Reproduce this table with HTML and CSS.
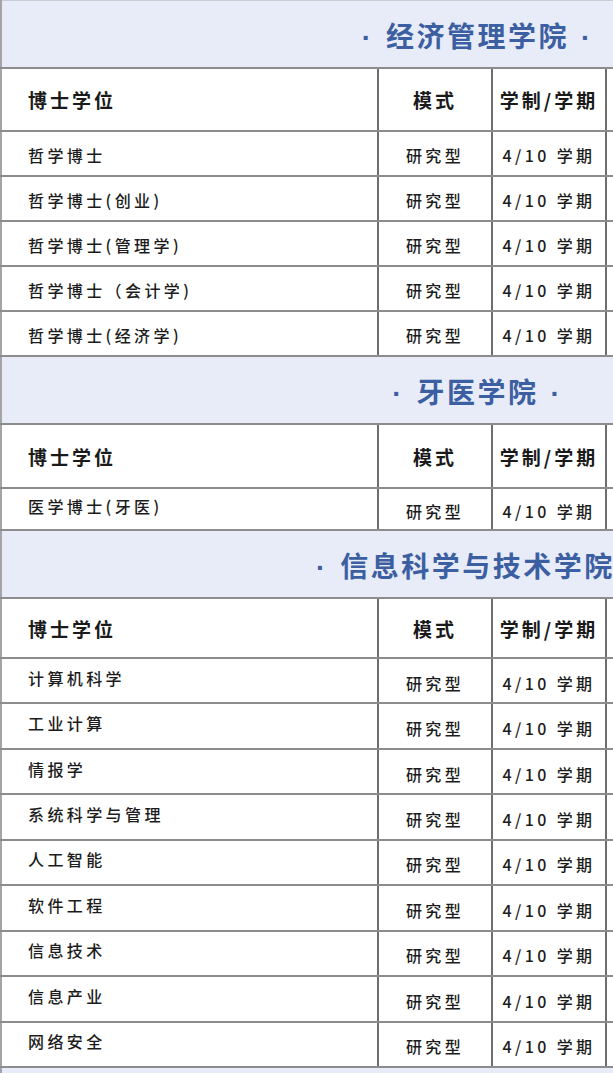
FILE: index.html
```html
<!DOCTYPE html>
<html lang="zh-CN">
<head>
<meta charset="utf-8">
<title>博士学位</title>
<link rel="stylesheet" href="styles.css">
</head>
<body>
<div class="viewport">
<table class="degrees">
  <colgroup>
    <col class="c-name"><col class="c-mode"><col class="c-term"><col class="c-extra">
  </colgroup>
  <tbody>
    <tr class="band"><td colspan="4"><span class="dot">·</span>经济管理学院<span class="dot">·</span></td></tr>
    <tr class="head first"><td class="name">博士学位</td><td>模式</td><td>学制/学期</td><td></td></tr>
    <tr class="row"><td class="name">哲学博士</td><td>研究型</td><td>4/10 学期</td><td></td></tr>
    <tr class="row"><td class="name">哲学博士(创业)</td><td>研究型</td><td>4/10 学期</td><td></td></tr>
    <tr class="row"><td class="name">哲学博士(管理学)</td><td>研究型</td><td>4/10 学期</td><td></td></tr>
    <tr class="row"><td class="name">哲学博士（会计学)</td><td>研究型</td><td>4/10 学期</td><td></td></tr>
    <tr class="row"><td class="name">哲学博士(经济学)</td><td>研究型</td><td>4/10 学期</td><td></td></tr>

    <tr class="band"><td colspan="4"><span class="dot">·</span>牙医学院<span class="dot">·</span></td></tr>
    <tr class="head tall"><td class="name">博士学位</td><td>模式</td><td>学制/学期</td><td></td></tr>
    <tr class="row offset short"><td class="name">医学博士(牙医)</td><td>研究型</td><td>4/10 学期</td><td></td></tr>

    <tr class="band"><td colspan="4"><span class="dot">·</span>信息科学与技术学院<span class="dot">·</span></td></tr>
    <tr class="head"><td class="name">博士学位</td><td>模式</td><td>学制/学期</td><td></td></tr>
    <tr class="row offset"><td class="name">计算机科学</td><td>研究型</td><td>4/10 学期</td><td></td></tr>
    <tr class="row offset"><td class="name">工业计算</td><td>研究型</td><td>4/10 学期</td><td></td></tr>
    <tr class="row offset"><td class="name">情报学</td><td>研究型</td><td>4/10 学期</td><td></td></tr>
    <tr class="row offset"><td class="name">系统科学与管理</td><td>研究型</td><td>4/10 学期</td><td></td></tr>
    <tr class="row offset"><td class="name">人工智能</td><td>研究型</td><td>4/10 学期</td><td></td></tr>
    <tr class="row offset"><td class="name">软件工程</td><td>研究型</td><td>4/10 学期</td><td></td></tr>
    <tr class="row offset"><td class="name">信息技术</td><td>研究型</td><td>4/10 学期</td><td></td></tr>
    <tr class="row offset"><td class="name">信息产业</td><td>研究型</td><td>4/10 学期</td><td></td></tr>
    <tr class="row offset"><td class="name">网络安全</td><td>研究型</td><td>4/10 学期</td><td></td></tr>

    <tr class="band"><td colspan="4"></td></tr>
  </tbody>
</table>
</div>
</body>
</html>
```

FILE: styles.css
```css
html, body {
  margin: 0;
  padding: 0;
  background: #ffffff;
}

.viewport {
  width: 613px;
  height: 1073px;
  overflow: hidden;
}

.degrees {
  width: 952px;
  border-collapse: collapse;
  table-layout: fixed;
  font-family: "Noto Sans CJK SC", "Noto Sans", sans-serif;
  color: #1f1f1f;
  border-left: 2px solid #a4a4a8;
}

.c-name { width: 377px; }
.c-mode { width: 114px; }
.c-term { width: 114px; }
.c-extra { width: 347px; }

.degrees td {
  border-top: 2px solid #8c8c8c;
  border-bottom: 2px solid #8c8c8c;
  border-left: 2px solid #6e6e6e;
  border-right: 2px solid #6e6e6e;
  padding: 0;
  text-align: center;
  vertical-align: middle;
  white-space: nowrap;
}

.degrees td.name {
  text-align: left;
  padding-left: 26px;
  border-left: none;
}

.band td {
  height: 64px;
  background: #e8ecf8;
  color: #3c5fa2;
  font-size: 28px;
  font-weight: 700;
  letter-spacing: 2.5px;
  border-left: none;
  border-right: none;
  border-top: 1px solid #c8cad2;
  border-bottom: 2px solid #8c8c8c;
  padding-top: 2px;
}

.band .dot {
  font-family: "Liberation Sans", sans-serif;
  font-weight: 700;
  display: inline-block;
  margin: 0 15px 0 12px;
  letter-spacing: 0;
}

.head td {
  height: 58px;
  font-size: 19px;
  font-weight: 700;
  letter-spacing: 3px;
  color: #1a1a1a;
}

.head.first td {
  height: 61px;
}

.head.tall td {
  height: 62px;
}

.row td {
  height: 41px;
  font-size: 16px;
  font-weight: 500;
  letter-spacing: 3.4px;
  color: #1c1c1c;
  padding-top: 2px;
}

/* second/third sections: degree name sits higher than the other cells */
.row.offset td {
  height: 39.45px;
  padding-top: 4px;
}

.row.offset td.name {
  height: 37.45px;
  padding-top: 0;
  padding-bottom: 6px;
}

.row.offset.short td {
  height: 36px;
}

.row.offset.short td.name {
  height: 34px;
}
```
